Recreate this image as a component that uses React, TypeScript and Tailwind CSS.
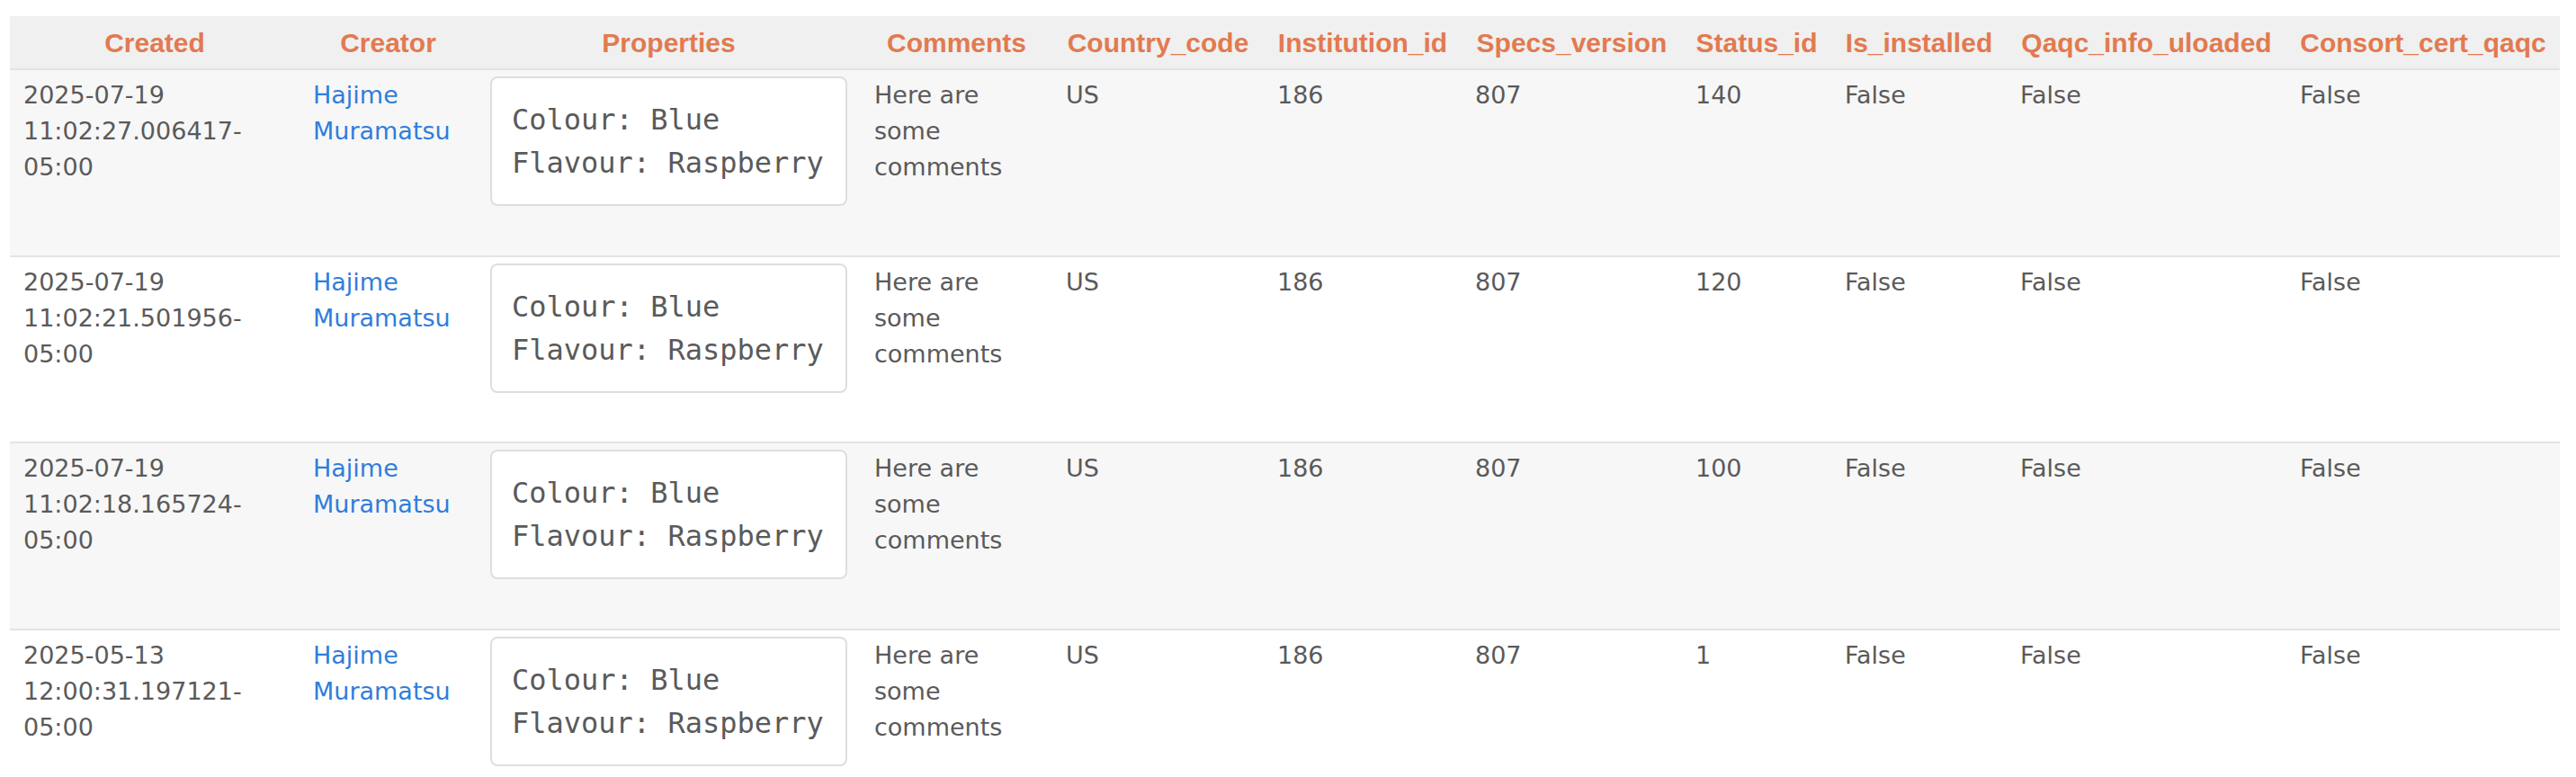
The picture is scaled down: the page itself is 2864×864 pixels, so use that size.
import React from "react";

const cols =
  "grid grid-cols-[322px_197px_427px_213px_235px_220px_245px_166px_195px_311px_304px]";

const headers = [
  "Created",
  "Creator",
  "Properties",
  "Comments",
  "Country_code",
  "Institution_id",
  "Specs_version",
  "Status_id",
  "Is_installed",
  "Qaqc_info_uloaded",
  "Consort_cert_qaqc",
];

const rows = [
  { date: "2025-07-19", time: "11:02:27.006417-", status: "140" },
  { date: "2025-07-19", time: "11:02:21.501956-", status: "120" },
  { date: "2025-07-19", time: "11:02:18.165724-", status: "100" },
  { date: "2025-05-13", time: "12:00:31.197121-", status: "1" },
];

function Cell({ children }: { children: React.ReactNode }) {
  return <div className="px-[15px] pt-[8px]">{children}</div>;
}

export default function App() {
  return (
    <div className="min-h-screen bg-white pt-[18px] pl-[11px]">
      <div className="w-[2835px]">
        <div
          className={`${cols} h-[60px] bg-[#f0f0f0] border-b-2 border-[#e2e2e2] text-[30px] font-bold text-[#e27a50] [font-family:'Liberation_Sans',Arial,sans-serif]`}
        >
          {headers.map((h) => (
            <div key={h} className="flex items-center justify-center px-[15px] whitespace-nowrap">
              {h}
            </div>
          ))}
        </div>
        {rows.map((r, i) => (
          <div
            key={i}
            className={`${cols} border-b-2 border-[#e4e4e4] ${
              i % 2 === 0 ? "bg-[#f7f7f7]" : "bg-white"
            } text-[27px] leading-[40px] text-[#5a5a5a] [font-family:'DejaVu_Sans',Verdana,sans-serif]`}
          >
            <Cell>
              <div>{r.date}</div>
              <div>{r.time}</div>
              <div>05:00</div>
            </Cell>
            <Cell>
              <div className="text-[#2f7ddc]">Hajime Muramatsu</div>
            </Cell>
            <div className="px-[15px] pt-[7px] pb-[54.5px]">
              <div className="flex h-[144px] flex-col justify-center rounded-[8px] border-2 border-[#dedede] bg-white px-[22px] text-[32px] leading-[48px] text-[#5a5a5a] [font-family:'DejaVu_Sans_Mono',monospace] whitespace-pre">
                <div>Colour: Blue</div>
                <div>Flavour: Raspberry</div>
              </div>
            </div>
            <Cell>Here are some comments</Cell>
            <Cell>US</Cell>
            <Cell>186</Cell>
            <Cell>807</Cell>
            <Cell>{r.status}</Cell>
            <Cell>False</Cell>
            <Cell>False</Cell>
            <Cell>False</Cell>
          </div>
        ))}
      </div>
    </div>
  );
}
